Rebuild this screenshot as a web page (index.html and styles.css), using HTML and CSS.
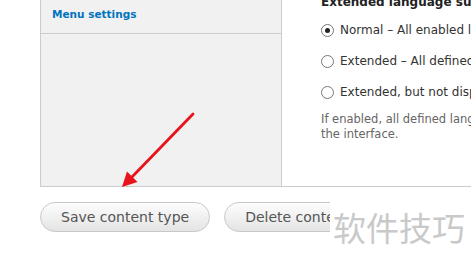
FILE: index.html
```html
<!DOCTYPE html>
<html lang="en">
<head>
    <meta charset="UTF-8">
    <title>Content type settings</title>
    <link rel="stylesheet" href="styles.css">
</head>
<body>
    <div class="page">
        <div class="tabs-panel">
            <ul class="tab-list">
                <li class="tab"><a href="#">Menu settings</a></li>
            </ul>
            <div class="tab-pane">
                <div class="form-item">
                    <label class="form-title">Extended language support</label>
                    <div class="radio"><span class="radio-dot checked"></span>Normal – All enabled languages will be displayed</div>
                    <div class="radio"><span class="radio-dot"></span>Extended – All defined languages will be displayed</div>
                    <div class="radio"><span class="radio-dot"></span>Extended, but not displayed in the language switcher</div>
                    <p class="description">If enabled, all defined languages will be allowed for this content type in addition to only enabled ones. This is useful to have more languages for content than for<br>the interface.</p>
                </div>
            </div>
        </div>

        <div class="actions">
            <button class="btn">Save content type</button>
            <button class="btn">Delete content type</button>
        </div>

        <!-- annotation arrow over the screenshot -->
        <svg class="arrow" width="80" height="80" viewBox="0 0 80 80">
            <path d="M75 2 L13 66" stroke="#e8141b" stroke-width="2.8" fill="none" stroke-linecap="round"/>
            <path d="M4 75 L9 59.5 L19.5 70 Z" fill="#e8141b"/>
        </svg>

        <div class="watermark">软件技巧</div>
    </div>
</body>
</html>
```

FILE: styles.css
```css
body {
    margin: 0;
    background: #fff;
    font-family: "DejaVu Sans", Verdana, sans-serif;
    color: #333;
    overflow: hidden;
}
.page {
    position: relative;
    width: 471px;
    height: 265px;
    overflow: hidden;
}
.tabs-panel {
    display: flex;
    margin-left: 40px;
    margin-top: -12px;
    height: 198px;
    border-left: 1px solid #ccc;
    border-bottom: 1px solid #ccc;
}
.tab-list {
    list-style: none;
    margin: 0;
    padding: 0;
    width: 240px;
    background: #f1f1f1;
    border-right: 1px solid #ccc;
    flex-shrink: 0;
}
.tab {
    padding: 15px 11px 0;
    height: 30px;
    border-bottom: 1px solid #ccc;
}
.tab a {
    color: #0074bd;
    font-weight: bold;
    font-size: 10.5px;
    text-decoration: none;
}
.tab-pane {
    padding-left: 39px;
    white-space: nowrap;
}
.form-title {
    display: block;
    font-weight: bold;
    font-size: 12px;
    color: #222;
    line-height: 16px;
    margin-top: 6px;
    margin-bottom: 12px;
}
.radio {
    display: flex;
    align-items: center;
    font-size: 12px;
    color: #333;
    height: 16px;
    margin-bottom: 15px;
}
.radio-dot {
    width: 11px;
    height: 11px;
    border: 1px solid #777;
    border-radius: 50%;
    margin-right: 6px;
    flex-shrink: 0;
    position: relative;
    background: #fff;
}
.radio-dot.checked::after {
    content: "";
    position: absolute;
    left: 3px;
    top: 3px;
    width: 5px;
    height: 5px;
    border-radius: 50%;
    background: #222;
}
.description {
    margin: -3px 0 0;
    font-size: 11.5px;
    line-height: 15px;
    color: #666;
}
.actions {
    display: flex;
    gap: 14px;
    margin: 15px 0 0 40px;
}
.btn {
    height: 30px;
    padding: 0 20px;
    border: 1px solid #c8c8c8;
    border-radius: 15px;
    background: linear-gradient(#fdfdfd, #e4e4e4);
    color: #555;
    font-family: "DejaVu Sans", Verdana, sans-serif;
    font-size: 14px;
    white-space: nowrap;
}
.arrow {
    position: absolute;
    left: 118px;
    top: 112px;
}
.watermark {
    position: absolute;
    left: 330px;
    top: 201px;
    width: 141px;
    height: 64px;
    background: #fff;
    color: #c9c9c9;
    font-family: "Noto Sans CJK SC", sans-serif;
    font-size: 33px;
    line-height: 52px;
    padding-left: 3px;
    box-sizing: border-box;
}
```
